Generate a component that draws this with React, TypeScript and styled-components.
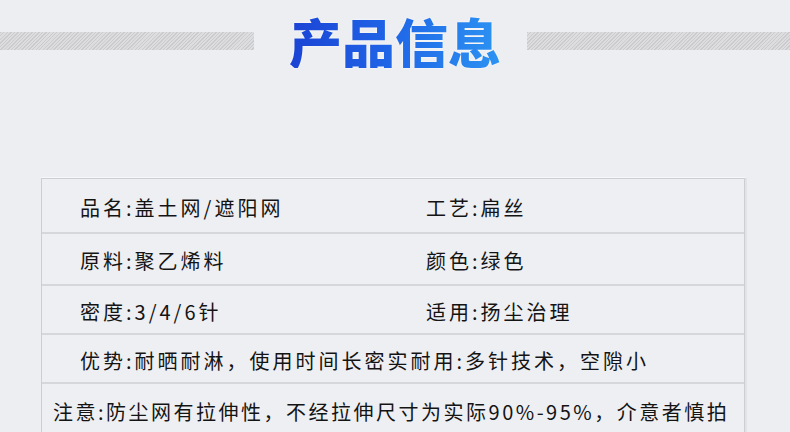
import React from 'react'
import styled, { createGlobalStyle } from 'styled-components'

const GlobalStyle = createGlobalStyle`
  html, body {
    margin: 0;
    padding: 0;
    background: #edeef2;
  }
  body {
    font-family: "Noto Sans CJK SC", "Noto Sans", sans-serif;
    color: #141414;
  }
`

const Page = styled.div`
  width: 790px;
  height: 432px;
  overflow: hidden;
  background: #edeef2;
`

const Header = styled.div`
  display: flex;
  align-items: center;
  height: 86px;
  padding-bottom: 92px;
`

const Stripe = styled.div<{ $w?: number }>`
  flex: ${(p) => (p.$w ? `0 0 ${p.$w}px` : '1')};
  height: 18px;
  margin-top: -4px;
  background: repeating-linear-gradient(
    135deg,
    #cbcbcd 0px,
    #cbcbcd 1px,
    #dddde0 1px,
    #dddde0 2.5px
  );
`

const Title = styled.h1`
  margin: 0 26px 4px 35px;
  font-size: 53px;
  font-weight: 900;
  line-height: 1;
  background: linear-gradient(90deg, #1b43d4 0%, #1f63e6 45%, #2c93f2 100%);
  -webkit-background-clip: text;
  background-clip: text;
  color: transparent;
  filter: drop-shadow(0 0 1px rgba(255, 255, 255, 0.9));
`

const Table = styled.div`
  margin-left: 41px;
  width: 702px;
  border: 1px solid #cdced2;
  border-bottom: none;
  box-shadow: 2px 0 0 #e2e3e6, 0 -1px 0 #f7f7f9;
  background: #eeeff3;
`

const Row = styled.div<{ $h: number; $cols: number }>`
  box-sizing: border-box;
  display: grid;
  grid-template-columns: ${(p) => (p.$cols === 2 ? '346px 1fr' : '1fr')};
  height: ${(p) => p.$h}px;
  align-items: center;
  & + & {
    border-top: 2px solid #d6d7db;
  }
`

const Cell = styled.div<{ $pad?: number; $ls?: number }>`
  padding-left: ${(p) => p.$pad ?? 38}px;
  padding-top: 3px;
  font-size: 20px;
  letter-spacing: ${(p) => p.$ls ?? 3}px;
  white-space: nowrap;
`

const rows: { h: number; cells: string[]; pad?: number; ls?: number }[] = [
  { h: 53, cells: ['品名:盖土网/遮阳网', '工艺:扁丝'] },
  { h: 52, cells: ['原料:聚乙烯料', '颜色:绿色'] },
  { h: 49, cells: ['密度:3/4/6针', '适用:扬尘治理'] },
  { h: 49, cells: ['优势:耐晒耐淋，使用时间长密实耐用:多针技术，空隙小'] },
  { h: 53, cells: ['注意:防尘网有拉伸性，不经拉伸尺寸为实际90%-95%，介意者慎拍'], pad: 11, ls: 2.5 },
]

export default function App() {
  return (
    <>
      <GlobalStyle />
      <Page>
        <Header>
          <Stripe $w={254} />
          <Title>产品信息</Title>
          <Stripe />
        </Header>
        <Table>
          {rows.map((r, i) => (
            <Row key={i} $h={r.h} $cols={r.cells.length}>
              {r.cells.map((c) => (
                <Cell key={c} $pad={r.pad} $ls={r.ls}>
                  {c}
                </Cell>
              ))}
            </Row>
          ))}
        </Table>
      </Page>
    </>
  )
}
